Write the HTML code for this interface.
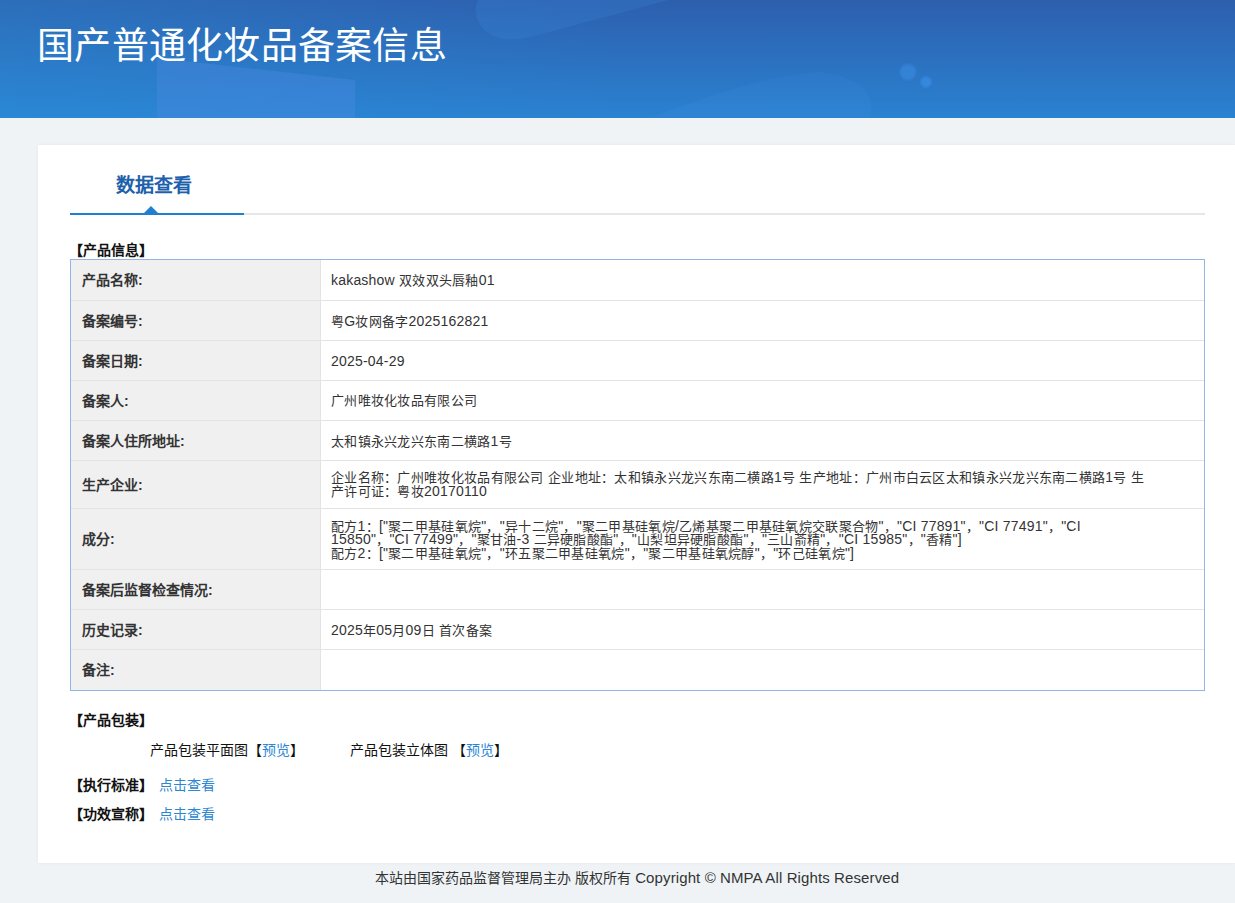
<!DOCTYPE html>
<html lang="zh-CN"><head><meta charset="utf-8">
<style>
*{margin:0;padding:0;box-sizing:border-box}
html,body{width:1235px;height:903px;overflow:hidden;background:#eff3f6;font-family:"Liberation Sans",sans-serif;color:#333}
.banner{position:absolute;left:0;top:0;width:1235px;height:118px;overflow:hidden}
.banner svg{position:absolute;left:0;top:0}
.banner h1{position:absolute;left:37px;top:21.7px;font-size:37px;font-weight:500;letter-spacing:.25px;color:#fff;line-height:50px;white-space:nowrap}
.panel{position:absolute;left:38px;top:145px;width:1197px;height:718px;background:#fff;box-shadow:0 0 3px rgba(0,30,80,.05)}
.tabline{position:absolute;left:70px;top:213px;width:1135px;height:2px;background:#e6e6e6}
.tabblue{position:absolute;left:70px;top:213px;width:174px;height:2px;background:#1f7fd0}
.tri{position:absolute;left:144px;top:206px;width:0;height:0;border-left:7px solid transparent;border-right:7px solid transparent;border-bottom:7px solid #1f7fd0}
.tabtext{position:absolute;left:116px;top:174px;font-size:19px;font-weight:bold;color:#1d61ab;line-height:24px;white-space:nowrap}
.sec{position:absolute;font-size:14px;font-weight:bold;color:#111;line-height:16px;white-space:nowrap}
.tbl{position:absolute;left:70px;top:259px;width:1135px;height:432px;border:1px solid #90b5e6}
.lcol{position:absolute;left:71px;top:260px;width:249px;height:430px;background:#f0f0f0}
.vsep{position:absolute;left:320px;top:260px;width:1px;height:430px;background:#e3e3e3}
.hl{position:absolute;left:71px;width:1133px;height:1px;background:#e3e3e3}
.lab{position:absolute;left:82px;font-size:14px;font-weight:bold;line-height:16px;color:#333;white-space:nowrap}
.val{position:absolute;left:331px;font-size:13px;line-height:12.5px;letter-spacing:.3px;color:#333;white-space:nowrap}
.en{font-size:14px;letter-spacing:.2px}
.link{color:#2d86d2}
.footer{position:absolute;left:375px;top:863px;height:30px;font-size:14px;line-height:30px;color:#333;white-space:nowrap}
.footer .en{font-size:15px;letter-spacing:.11px}
</style></head><body>
<div class="banner">
 <svg width="1235" height="118" viewBox="0 0 1235 118">
  <defs>
   <linearGradient id="gv" x1="0" y1="0" x2="0" y2="1">
    <stop offset="0" stop-color="#2d5fae"/>
    <stop offset="1" stop-color="#2a82d1"/>
   </linearGradient>
   <linearGradient id="gh" x1="0" y1="0" x2="1" y2="0">
    <stop offset="0" stop-color="#2a9be0" stop-opacity=".25"/>
    <stop offset=".5" stop-color="#2a9be0" stop-opacity="0"/>
    <stop offset="1" stop-color="#2a9be0" stop-opacity="0"/>
   </linearGradient>
  <filter id="bl"><feGaussianBlur stdDeviation="1"/></filter>
  </defs>
  <rect width="1235" height="118" fill="url(#gv)"/>
  <rect width="1235" height="118" fill="url(#gh)"/>
  <polygon points="157,58 355,80 355,118 157,118" fill="#4a8ae0" fill-opacity=".4"/>
  <path d="M478,0 L669,0 L530,37 Q495,45 481,26 Q472,12 478,0 Z" fill="#3d8ee0" fill-opacity=".22"/>
  <path d="M650,118 L870,118 Q880,80 820,72 Q760,75 650,118 Z" fill="#5fb0ff" fill-opacity=".07"/>
  <g filter="url(#bl)"><circle cx="908" cy="72" r="8" fill="#3a8ee6" fill-opacity=".55"/>
  <circle cx="926" cy="82" r="5.5" fill="#3a8ee6" fill-opacity=".7"/></g>
 </svg>
 <h1>国产普通化妆品备案信息</h1>
</div>
<div class="panel"></div>
<div class="tabtext">数据查看</div>
<div class="tabline"></div>
<div class="tabblue"></div>
<div class="tri"></div>
<div class="sec" style="left:69px;top:242px">【产品信息】</div>
<div class="tbl"></div>
<div class="lcol"></div>
<div class="vsep"></div>
<div class="lab" style="top:272.0px">产品名称:</div>
<div class="val" style="top:274.2px"><span class="en">kakashow </span>双效双头唇釉<span class="en">01</span></div>
<div class="hl" style="top:300px"></div>
<div class="lab" style="top:312.5px">备案编号:</div>
<div class="val" style="top:314.8px">粤<span class="en">G</span>妆网备字<span class="en">2025162821</span></div>
<div class="hl" style="top:340px"></div>
<div class="lab" style="top:352.5px">备案日期:</div>
<div class="val" style="top:354.8px"><span class="en">2025-04-29</span></div>
<div class="hl" style="top:380px"></div>
<div class="lab" style="top:392.5px">备案人:</div>
<div class="val" style="top:394.8px">广州唯妆化妆品有限公司</div>
<div class="hl" style="top:420px"></div>
<div class="lab" style="top:432.5px">备案人住所地址:</div>
<div class="val" style="top:434.8px">太和镇永兴龙兴东南二横路<span class="en">1</span>号</div>
<div class="hl" style="top:460px"></div>
<div class="lab" style="top:476.5px">生产企业:</div>
<div class="val" style="top:471.3px">企业名称：广州唯妆化妆品有限公司<span class="en"> </span>企业地址：太和镇永兴龙兴东南二横路<span class="en">1</span>号<span class="en"> </span>生产地址：广州市白云区太和镇永兴龙兴东南二横路<span class="en">1</span>号<span class="en"> </span>生<br>产许可证：粤妆<span class="en">20170110</span></div>
<div class="hl" style="top:508px"></div>
<div class="lab" style="top:531.0px">成分:</div>
<div class="val" style="top:519.5px">配方<span class="en">1</span>：<span class="en">["</span>聚二甲基硅氧烷<span class="en">"</span>，<span class="en">"</span>异十二烷<span class="en">"</span>，<span class="en">"</span>聚二甲基硅氧烷<span class="en">/</span>乙烯基聚二甲基硅氧烷交联聚合物<span class="en">"</span>，<span class="en">"CI 77891"</span>，<span class="en">"CI 77491"</span>，<span class="en">"CI</span><br><span class="en">15850"</span>，<span class="en">"CI 77499"</span>，<span class="en">"</span>聚甘油<span class="en">-3 </span>二异硬脂酸酯<span class="en">"</span>，<span class="en">"</span>山梨坦异硬脂酸酯<span class="en">"</span>，<span class="en">"</span>三山萮精<span class="en">"</span>，<span class="en">"CI 15985"</span>，<span class="en">"</span>香精<span class="en">"]</span><br>配方<span class="en">2</span>：<span class="en">["</span>聚二甲基硅氧烷<span class="en">"</span>，<span class="en">"</span>环五聚二甲基硅氧烷<span class="en">"</span>，<span class="en">"</span>聚二甲基硅氧烷醇<span class="en">"</span>，<span class="en">"</span>环己硅氧烷<span class="en">"]</span></div>
<div class="hl" style="top:569px"></div>
<div class="lab" style="top:581.5px">备案后监督检查情况:</div>
<div class="hl" style="top:609px"></div>
<div class="lab" style="top:621.5px">历史记录:</div>
<div class="val" style="top:623.8px"><span class="en">2025</span>年<span class="en">05</span>月<span class="en">09</span>日<span class="en"> </span>首次备案</div>
<div class="hl" style="top:649px"></div>
<div class="lab" style="top:662.0px">备注:</div>
<div class="sec" style="left:69px;top:712px">【产品包装】</div>
<div style="position:absolute;left:150px;top:742px;font-size:14px;line-height:16px;white-space:nowrap;color:#111">产品包装平面图【<span class="link">预览</span>】</div>
<div style="position:absolute;left:350px;top:742px;font-size:14px;line-height:16px;white-space:nowrap;color:#111">产品包装立体图 【<span class="link">预览</span>】</div>
<div class="sec" style="left:69px;top:777px">【执行标准】<span class="link" style="font-weight:normal;margin-left:6px">点击查看</span></div>
<div class="sec" style="left:69px;top:806px">【功效宣称】<span class="link" style="font-weight:normal;margin-left:6px">点击查看</span></div>
<div class="footer">本站由国家药品监督管理局主办 版权所有<span class="en"> Copyright © NMPA All Rights Reserved</span></div>
</body></html>
